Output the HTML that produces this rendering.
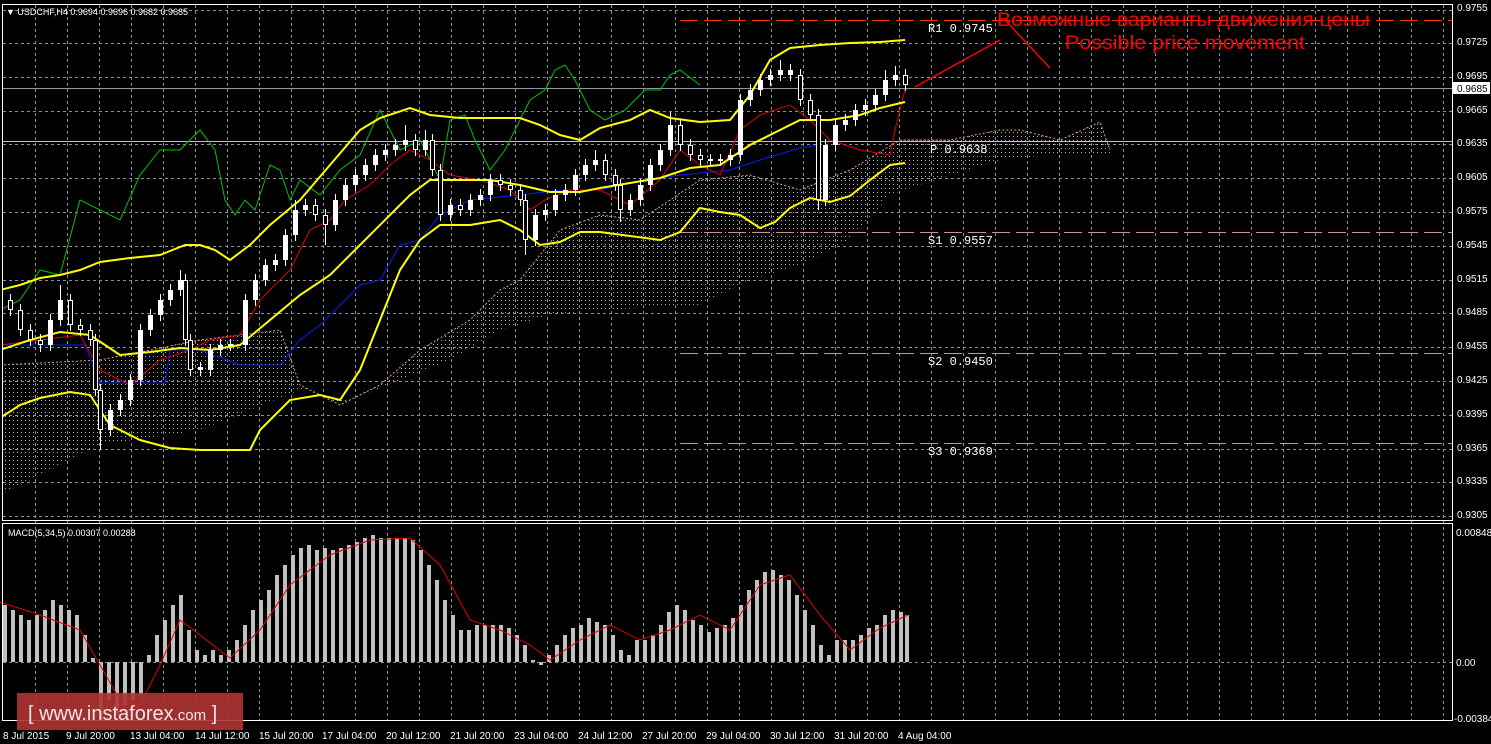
<!DOCTYPE html>
<html><head><meta charset="utf-8"><style>
html,body{margin:0;padding:0;background:#000;width:1491px;height:744px;overflow:hidden}
svg{display:block}
text{font-family:"Liberation Sans",sans-serif;font-size:10px;fill:#fff}
.m{font-family:"Liberation Mono",monospace;font-size:12px}
</style></head><body>
<svg width="1491" height="744" viewBox="0 0 1491 744" xmlns="http://www.w3.org/2000/svg">
<defs>
<pattern id="hatch" width="4" height="4" patternUnits="userSpaceOnUse">
<rect x="1" y="0" width="1" height="1" fill="#ddd"/>
</pattern>
<clipPath id="mc"><rect x="3" y="5" width="1449" height="515"/></clipPath>
</defs>
<g stroke="#8a8f99" stroke-width="1" stroke-dasharray="3,3">
<path d="M3 10.5H1452M3 43.5H1452M3 77.5H1452M3 111.5H1452M3 144.5H1452M3 178.5H1452M3 212.5H1452M3 246.5H1452M3 280.5H1452M3 313.5H1452M3 347.5H1452M3 381.5H1452M3 415.5H1452M3 449.5H1452M3 482.5H1452M3 516.5H1452"/>
<path d="M35.5 5V720M67.5 5V720M99.5 5V720M131.5 5V720M163.5 5V720M195.5 5V720M227.5 5V720M259.5 5V720M291.5 5V720M323.5 5V720M355.5 5V720M387.5 5V720M419.5 5V720M451.5 5V720M483.5 5V720M515.5 5V720M547.5 5V720M579.5 5V720M611.5 5V720M643.5 5V720M675.5 5V720M707.5 5V720M739.5 5V720M771.5 5V720M803.5 5V720M835.5 5V720M867.5 5V720M899.5 5V720M931.5 5V720M963.5 5V720M995.5 5V720M1027.5 5V720M1059.5 5V720M1091.5 5V720M1123.5 5V720M1155.5 5V720M1187.5 5V720M1219.5 5V720M1251.5 5V720M1283.5 5V720M1315.5 5V720M1347.5 5V720M1379.5 5V720M1411.5 5V720M1443.5 5V720"/>
<path d="M3 662.5H1452"/>
</g>
<g clip-path="url(#mc)">
<path d="M0 365L100 360L200 340L280 330L300 385L340 405L380 385L420 350L470 320L500 290L520 280L560 230L600 215L640 220L700 180L750 175L800 190L850 170L900 140L950 140L1000 130L1020 130L1060 140L1100 122L1110 150L1110 155L1050 155L1000 160L950 175L890 195L850 240L800 265L750 280L700 305L600 310L550 315L500 330L450 360L400 380L350 400L300 390L200 430L100 445L0 495Z" fill="url(#hatch)" opacity="0.8"/>
<polyline fill="none" stroke="#e0a080" stroke-width="1" stroke-dasharray="2,2" points="0,365 100,360 200,340 280,330 300,385 340,405 380,385 420,350 470,320 500,290 520,280 560,230 600,215 640,220 700,180 750,175 800,190 850,170 900,140 950,140 1000,130 1020,130 1060,140 1100,122 1110,150"/>
<path d="M0 88.5H1452" stroke="#8e98a8" stroke-width="1"/>
<path d="M0 141.5H1452" stroke="#c8c0a0" stroke-width="1"/>
<path d="M680 20.5H1452" stroke="#ff3000" stroke-width="1" stroke-dasharray="18,6"/>
<path d="M680 232.5H1452M680 353.5H1452M680 443.5H1452" stroke="#d09090" stroke-width="1" stroke-dasharray="18,6"/>
<polyline fill="none" stroke="#00c000" stroke-width="1" points="0,310 20,300 40,270 60,275 80,200 100,210 120,220 140,175 160,150 180,150 200,130 215,150 225,200 235,215 245,200 255,210 270,165 280,170 290,200 300,180 320,195 340,170 360,155 380,110 400,150 420,140 440,180 450,120 465,115 475,140 490,170 505,150 520,120 530,100 545,90 555,70 565,65 575,80 590,110 605,120 625,110 645,90 660,90 670,75 680,70 700,85"/>
<polyline fill="none" stroke="#0020ff" stroke-width="1" points="0,345 85,345 100,383 165,383 170,350 200,350 240,365 280,365 300,340 320,325 340,305 360,285 380,280 400,245 420,240 440,215 470,200 520,195 560,190 600,190 620,185 680,175 730,170 760,160 800,148 820,145"/>
<polyline fill="none" stroke="#e00000" stroke-width="1" points="0,345 40,340 80,335 100,370 130,385 160,360 190,350 210,340 240,335 260,300 290,270 310,230 330,220 345,200 370,185 390,165 410,150 430,160 450,175 480,180 510,190 530,210 545,200 570,190 600,190 630,205 660,180 680,150 700,165 720,175 740,130 760,115 790,105 810,120 830,140 860,150 890,155 895,130 905,90"/>
<g fill="none" stroke="#ffff00" stroke-width="2">
<polyline points="0,290 20,285 40,278 60,275 80,270 100,262 130,258 160,255 185,245 200,245 215,250 230,260 250,245 270,225 300,200 330,165 360,130 380,118 410,108 430,115 460,118 490,118 520,118 540,125 560,135 580,140 600,128 630,120 650,110 670,118 700,122 730,120 750,95 770,60 790,48 820,45 850,43 880,42 905,40"/>
<polyline points="0,350 30,340 60,332 90,335 120,355 150,352 180,348 210,350 240,345 270,320 300,295 330,275 360,245 390,215 410,195 430,180 460,180 490,180 520,185 550,192 580,192 600,188 630,183 660,178 690,168 720,165 750,145 780,130 800,120 830,120 860,115 880,108 905,102"/>
<polyline points="0,418 20,405 40,398 70,392 90,395 110,425 140,440 170,448 200,450 250,450 260,430 290,400 320,395 340,400 360,370 380,320 400,270 420,240 440,225 470,225 500,220 520,230 540,245 560,242 580,232 600,232 630,236 660,240 680,232 700,208 720,212 740,215 760,228 775,222 790,208 810,198 830,202 850,196 870,180 890,165 905,163"/>
</g>
<path stroke="#fff" stroke-width="1" d="M10.5 294V316M20.5 304V336M30.5 324V346M40.5 334V352M50.5 314V351M60.5 285V326M70.5 294V331M80.5 319V336M90.5 324V346M95.5 334V396M100.5 384V450M110.5 404V436M120.5 394V416M130.5 374V406M140.5 324V386M150.5 309V336M160.5 294V321M170.5 284V306M180.5 270V296M185.5 274V346M190.5 334V376M200.5 362V376M210.5 344V376M220.5 339V356M230.5 339V351M245.5 294V351M255.5 274V306M265.5 259V286M275.5 254V271M285.5 229V266M295.5 200V241M305.5 199V216M315.5 199V221M325.5 209V245M335.5 194V231M345.5 179V206M355.5 169V191M365.5 159V181M375.5 149V171M385.5 144V161M395.5 139V156M405.5 125V151M415.5 134V156M425.5 130V156M432.5 134V176M440.5 164V221M450.5 199V221M460.5 199V216M470.5 194V216M480.5 189V206M490.5 174V201M500.5 174V191M510.5 179V196M520.5 184V206M525.5 194V255M535.5 209V246M545.5 204V221M555.5 189V216M565.5 184V201M575.5 169V196M585.5 159V181M595.5 150V171M605.5 154V181M615.5 169V191M620.5 179V222M630.5 194V216M640.5 179V206M650.5 159V191M660.5 144V171M670.5 112V156M680.5 119V151M690.5 139V161M700.5 149V166M710.5 154V166M720.5 154V166M730.5 149V166M740.5 94V161M750.5 84V106M760.5 74V96M770.5 69V86M780.5 60V81M790.5 64V81M800.5 69V106M810.5 94V121M818.5 109V210M825.5 139V206M835.5 119V151M845.5 114V131M855.5 104V126M865.5 99V116M875.5 89V111M885.5 70V101M895.5 66V86M905.5 69V91"/>
<path stroke="#fff" stroke-width="5" d="M10.5 300V310M20.5 310V330M30.5 330V340M40.5 340V345M50.5 345V320M60.5 320V300M70.5 300V325M80.5 325V330M90.5 330V340M95.5 340V390M100.5 390V430M110.5 430V410M120.5 410V400M130.5 400V380M140.5 380V330M150.5 330V315M160.5 315V300M170.5 300V290M180.5 290V280M185.5 280V340M190.5 340V370M200.5 370V367M210.5 370V350M220.5 350V345M230.5 346V344M245.5 345V300M255.5 300V280M265.5 280V265M275.5 265V260M285.5 260V235M295.5 235V210M305.5 210V205M315.5 205V215M325.5 215V225M335.5 225V200M345.5 200V185M355.5 185V175M365.5 175V165M375.5 165V155M385.5 155V150M395.5 150V145M405.5 145V140M415.5 140V150M425.5 150V140M432.5 140V170M440.5 170V215M450.5 215V205M460.5 205V210M470.5 210V200M480.5 200V195M490.5 195V180M500.5 180V185M510.5 185V190M520.5 190V200M525.5 200V240M535.5 240V215M545.5 215V210M555.5 210V195M565.5 195V190M575.5 190V175M585.5 175V165M595.5 165V160M605.5 160V175M615.5 175V185M620.5 185V210M630.5 210V200M640.5 200V185M650.5 185V165M660.5 165V150M670.5 150V125M680.5 125V145M690.5 145V155M700.5 155V160M710.5 161V159M720.5 161V159M730.5 160V155M740.5 155V100M750.5 100V90M760.5 90V80M770.5 80V75M780.5 75V70M790.5 70V75M800.5 75V100M810.5 100V115M818.5 115V200M825.5 200V145M835.5 145V125M845.5 125V120M855.5 120V110M865.5 110V105M875.5 105V95M885.5 95V80M895.5 80V75M905.5 75V85"/>
<path stroke="#000" stroke-width="3" d="M10.5 301V309M20.5 311V329M30.5 331V339M40.5 341V344M70.5 301V324M80.5 326V329M90.5 331V339M95.5 341V389M100.5 391V429M185.5 281V339M190.5 341V369M315.5 206V214M325.5 216V224M415.5 141V149M432.5 141V169M440.5 171V214M460.5 206V209M500.5 181V184M510.5 186V189M520.5 191V199M525.5 201V239M605.5 161V174M615.5 176V184M620.5 186V209M680.5 126V144M690.5 146V154M700.5 156V159M800.5 76V99M810.5 101V114M818.5 116V199M905.5 76V84"/>
<path d="M915 87L1000 40M1005 20L1050 68" stroke="#ff0000" stroke-width="1.5" fill="none"/>
</g>
<text x="928" y="32" class="m">R1 0.9745</text>
<text x="930" y="153" class="m">P 0.9638</text>
<text x="928" y="244" class="m">S1 0.9557</text>
<text x="928" y="365" class="m">S2 0.9450</text>
<text x="928" y="455" class="m">S3 0.9369</text>
<text x="997" y="26" textLength="373" lengthAdjust="spacingAndGlyphs" style="font-size:19px;fill:#ff0000">Возможные варианты движения цены</text>
<text x="1065" y="49" textLength="240" lengthAdjust="spacingAndGlyphs" style="font-size:19px;fill:#ff0000">Possible price movement</text>
<path stroke="#c0c0c0" stroke-width="4" d="M5 662V605M13 662V610M21 662V615M29 662V620M37 662V615M45 662V610M53 662V600M61 662V605M69 662V610M77 662V615M85 662V635M93 662V658M101 662V720M109 662V700M117 662V715M125 662V705M133 662V700M141 662V695M149 662V655M157 662V635M165 662V620M173 662V605M181 662V595M189 662V630M197 662V650M205 662V655M213 662V650M221 662V655M229 662V650M237 662V640M245 662V625M253 662V610M261 662V600M269 662V590M277 662V575M285 662V565M293 662V555M301 662V548M309 662V545M317 662V550M325 662V548M333 662V550M341 662V548M349 662V545M357 662V542M365 662V538M373 662V535M381 662V538M389 662V538M397 662V538M405 662V538M413 662V540M421 662V550M429 662V565M437 662V580M445 662V600M453 662V615M461 662V630M469 662V630M477 662V625M485 662V625M493 662V625M501 662V625M509 662V628M517 662V635M525 662V645M533 662V660M541 662V665M549 662V655M557 662V645M565 662V635M573 662V628M581 662V625M589 662V618M597 662V622M605 662V625M613 662V635M621 662V650M629 662V655M637 662V640M645 662V640M653 662V635M661 662V625M669 662V612M677 662V605M685 662V610M693 662V620M701 662V625M709 662V632M717 662V628M725 662V625M733 662V618M741 662V605M749 662V590M757 662V580M765 662V572M773 662V570M781 662V575M789 662V580M797 662V595M805 662V610M813 662V625M821 662V645M829 662V655M837 662V640M845 662V640M853 662V640M861 662V635M869 662V628M877 662V625M885 662V615M893 662V610M901 662V612M907 662V615"/>
<polyline fill="none" stroke="#e00000" stroke-width="1" points="0,602 40,615 80,630 100,665 120,700 140,705 160,665 180,620 200,635 230,658 260,630 290,585 330,555 370,540 410,538 440,565 470,620 500,630 530,645 550,660 580,640 610,625 640,640 670,630 700,615 730,630 760,585 790,575 820,615 850,650 880,628 908,615"/>
<text x="8" y="536" style="font-size:9px">MACD(5,34,5) 0.00307 0.00288</text>
<rect x="2.5" y="4.5" width="1450" height="516" fill="none" stroke="#fff"/>
<rect x="2.5" y="523.5" width="1450" height="197" fill="none" stroke="#fff"/>
<text x="6" y="15" style="font-size:9px">▼ USDCHF,H4  0.9694 0.9696 0.9682 0.9685</text>
<g style="font-size:10px">
<text x="1457" y="11">0.9755</text><text x="1457" y="45">0.9725</text><text x="1457" y="79">0.9695</text>
<text x="1457" y="113">0.9665</text><text x="1457" y="146">0.9635</text><text x="1457" y="180">0.9605</text>
<text x="1457" y="214">0.9575</text><text x="1457" y="248">0.9545</text><text x="1457" y="282">0.9515</text>
<text x="1457" y="315">0.9485</text><text x="1457" y="349">0.9455</text><text x="1457" y="383">0.9425</text>
<text x="1457" y="417">0.9395</text><text x="1457" y="451">0.9365</text><text x="1457" y="484">0.9335</text>
<text x="1457" y="518">0.9305</text>
<text x="1456" y="536">0.00848</text><text x="1456" y="666">0.00</text><text x="1454" y="722">-0.00384</text>
</g>
<rect x="1453" y="82" width="37" height="12" fill="#fff"/>
<text x="1457" y="92" style="fill:#000">0.9685</text>
<g style="font-size:10px">
<text x="3" y="739">8 Jul 2015</text><text x="66" y="739">9 Jul 20:00</text><text x="130" y="739">13 Jul 04:00</text>
<text x="195" y="739">14 Jul 12:00</text><text x="259" y="739">15 Jul 20:00</text><text x="322" y="739">17 Jul 04:00</text>
<text x="386" y="739">20 Jul 12:00</text><text x="450" y="739">21 Jul 20:00</text><text x="514" y="739">23 Jul 04:00</text>
<text x="578" y="739">24 Jul 12:00</text><text x="642" y="739">27 Jul 20:00</text><text x="706" y="739">29 Jul 04:00</text>
<text x="770" y="739">30 Jul 12:00</text><text x="834" y="739">31 Jul 20:00</text><text x="898" y="739">4 Aug 04:00</text>
</g>
<rect x="17" y="693" width="226" height="37" fill="#b03434" opacity="0.9"/>
<text x="28" y="720" style="font-size:20px;fill:#f4e6e6">[  www.instaforex<tspan style="font-size:15px">.com</tspan>  ]</text>
</svg>
</body></html>
